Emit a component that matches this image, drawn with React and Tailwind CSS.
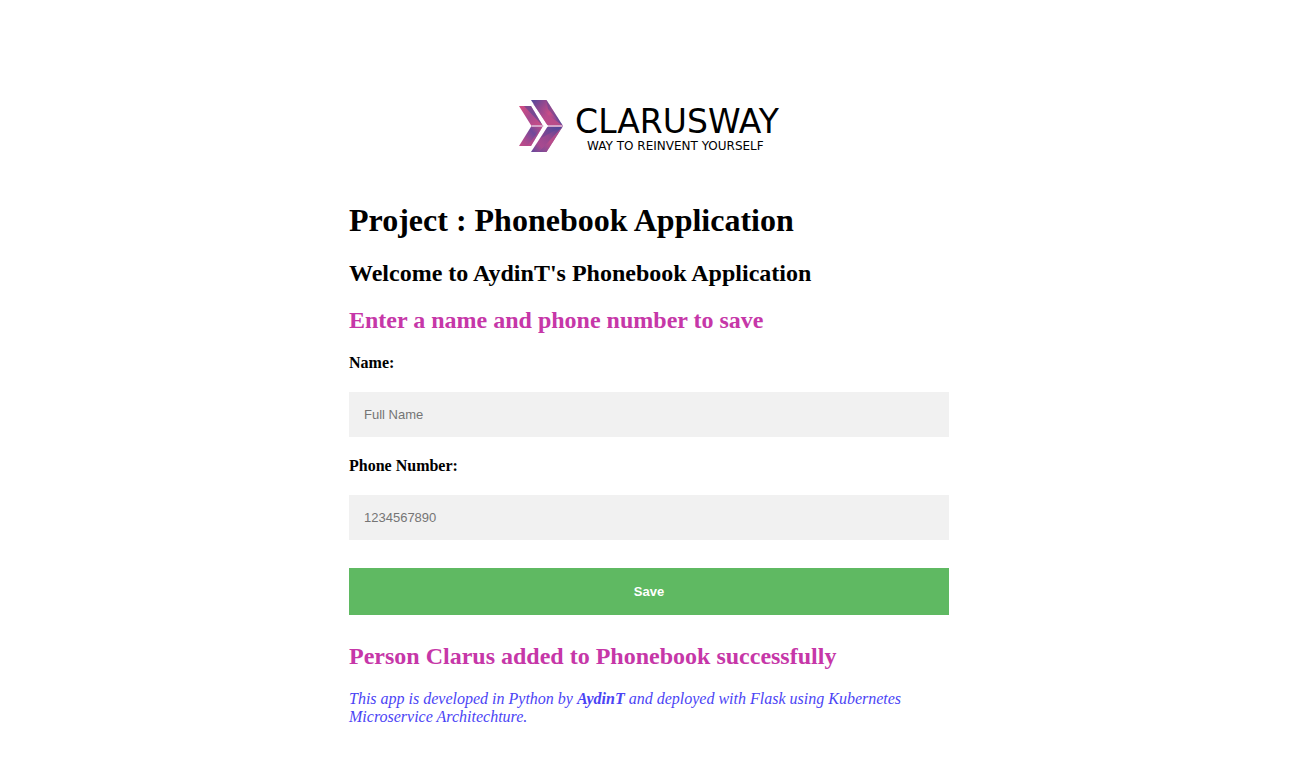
import { useState } from "react";

function LogoMark() {
  return (
    <svg className="h-[52px] w-11 shrink-0" viewBox="0 0 44 52" aria-hidden="true">
      <defs>
        <linearGradient id="outerTop" x1="12" y1="0" x2="44" y2="26" gradientUnits="userSpaceOnUse">
          <stop offset="0" stopColor="#50489a" />
          <stop offset="0.3" stopColor="#94488f" />
          <stop offset="0.55" stopColor="#c94c86" />
          <stop offset="0.8" stopColor="#844a94" />
          <stop offset="1" stopColor="#5f489a" />
        </linearGradient>
        <linearGradient id="outerTopLow" x1="16" y1="6" x2="34" y2="26" gradientUnits="userSpaceOnUse">
          <stop offset="0" stopColor="#7a4894" />
          <stop offset="0.5" stopColor="#b04a8e" />
          <stop offset="1" stopColor="#cc4c84" />
        </linearGradient>
        <linearGradient id="outerBottom" x1="44" y1="26" x2="14" y2="52" gradientUnits="userSpaceOnUse">
          <stop offset="0" stopColor="#43479a" />
          <stop offset="0.45" stopColor="#94488f" />
          <stop offset="0.75" stopColor="#a84a90" />
          <stop offset="1" stopColor="#6a489a" />
        </linearGradient>
        <linearGradient id="outerBottomEdge" x1="40" y1="30" x2="20" y2="52" gradientUnits="userSpaceOnUse">
          <stop offset="0" stopColor="#b84c8a" />
          <stop offset="0.5" stopColor="#c24c88" />
          <stop offset="1" stopColor="#6a4a98" />
        </linearGradient>
        <linearGradient id="innerTop" x1="2" y1="6" x2="22" y2="26" gradientUnits="userSpaceOnUse">
          <stop offset="0" stopColor="#d24c82" />
          <stop offset="0.5" stopColor="#a84a90" />
          <stop offset="1" stopColor="#cc4c84" />
        </linearGradient>
        <linearGradient id="innerBottom" x1="24" y1="26" x2="2" y2="46" gradientUnits="userSpaceOnUse">
          <stop offset="0" stopColor="#c44c86" />
          <stop offset="0.4" stopColor="#70489a" />
          <stop offset="0.75" stopColor="#a84a90" />
          <stop offset="1" stopColor="#c04c88" />
        </linearGradient>
      </defs>
      <path d="M12 0H27.500L44 26H29z" fill="url(#outerTop)" />
      <path d="M14 3.500L44 26H29z" fill="url(#outerTopLow)" opacity="0.75" />
      <path d="M27.500 0L44 26L29 9z" fill="#4b4796" opacity="0.45" />
      <path d="M29 26H44L27.500 52H12z" fill="url(#outerBottom)" />
      <path d="M44 26L27.500 52H20z" fill="url(#outerBottomEdge)" opacity="0.8" />
      <path d="M44 26L22 38L29 26z" fill="#4c479a" opacity="0.4" />
      <path d="M0 6H12L24 26H12.500z" fill="url(#innerTop)" />
      <path d="M12 6L24 26L5 6z" fill="#4a4796" opacity="0.55" />
      <path d="M12.500 26H24L12 46H0z" fill="url(#innerBottom)" />
      <path d="M24 26L12 46H8z" fill="#cb4c84" opacity="0.5" />
      <path d="M12.500 25H43.500L44 26L43.500 27H12.500z" fill="#d3a3c8" />
      <path d="M24 25H28.500L29 26L28.500 27H24L24.500 26z" fill="#fff" />
    </svg>
  );
}

function Field({ id, label, placeholder, type, value, onChange }) {
  return (
    <div className="flex flex-col gap-5">
      <label htmlFor={id} className="text-base leading-[18px] font-bold">
        {label}
      </label>
      <input
        id={id}
        name={id}
        type={type}
        value={value}
        onChange={(event) => onChange(event.target.value)}
        placeholder={placeholder}
        className="w-full bg-[#f1f1f1] p-[15px] font-['Liberation_Sans',Arial,sans-serif] text-[13px] leading-[15px] outline-none placeholder:text-[#757575] focus:bg-[#dddddd]"
      />
    </div>
  );
}

export default function App() {
  const [name, setName] = useState("");
  const [phone, setPhone] = useState("");

  return (
    <main className="bg-white pt-[100px] pr-3 pb-12 font-['Liberation_Serif','Times_New_Roman',serif] text-black">
      <div className="mx-auto w-full max-w-[600px]">
        <header className="flex justify-center gap-3">
          <LogoMark />
          <div className="flex flex-col pt-1.5 font-['DejaVu_Sans',Verdana,sans-serif]">
            <span className="text-[33px] leading-[32px]">CLARUSWAY</span>
            <span className="pl-3 text-xs leading-4">WAY TO REINVENT YOURSELF</span>
          </div>
        </header>

        <h1 className="mt-12 text-[32px] leading-[37px] font-bold">
          Project : Phonebook Application
        </h1>
        <h2 className="mt-[21px] text-2xl leading-[27px] font-bold">
          Welcome to AydinT's Phonebook Application
        </h2>
        <h2 className="mt-5 text-2xl leading-[27px] font-bold text-[#c637a8]">
          Enter a name and phone number to save
        </h2>

        <form className="mt-5 flex flex-col gap-5" onSubmit={(event) => event.preventDefault()}>
          <Field id="username" label="Name:" type="text" placeholder="Full Name" value={name} onChange={setName} />
          <Field id="phonenumber" label="Phone Number:" type="tel" placeholder="1234567890" value={phone} onChange={setPhone} />
          <button
            type="submit"
            className="mt-2 w-full cursor-pointer bg-[#5fb962] px-5 py-4 font-['Liberation_Sans',Arial,sans-serif] text-[13px] leading-[15px] font-bold text-white hover:bg-[#4caf50]"
          >
            Save
          </button>
        </form>

        <h2 className="mt-7 text-2xl leading-[27px] font-bold text-[#c637a8]">
          Person Clarus added to Phonebook successfully
        </h2>
        <p className="mt-5 text-base leading-[18px] text-[#4b44f5] italic">
          This app is developed in Python by <b>AydinT</b> and deployed with Flask using Kubernetes
          Microservice Architechture.
        </p>
      </div>
    </main>
  );
}
